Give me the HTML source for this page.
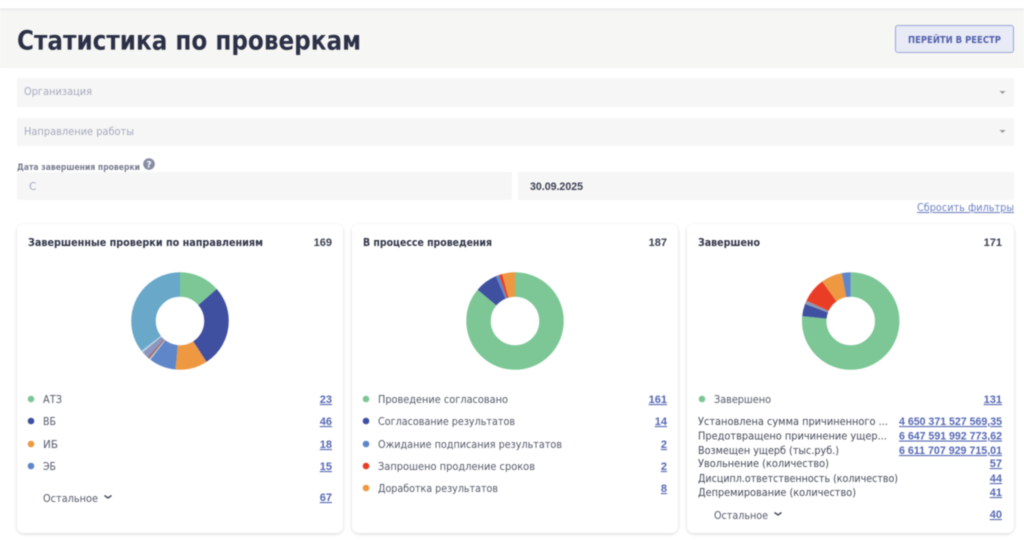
<!DOCTYPE html>
<html lang="ru"><head><meta charset="utf-8"><title>Статистика по проверкам</title>
<style>
html,body{margin:0;padding:0;width:1024px;height:540px;overflow:hidden;background:#fff}
svg{display:block;filter:blur(.5px)}
text{font-family:"DejaVu Sans","Liberation Sans",sans-serif}
.t{font-size:10.5px;fill:#555969}
.n{font-family:"Liberation Sans","DejaVu Sans",sans-serif;font-size:11px;font-weight:700;fill:#5568b4;text-decoration:underline}
.h{font-size:10.5px;font-weight:700;fill:#2f3447}
.v{font-family:"Liberation Sans","DejaVu Sans",sans-serif;font-size:11px;font-weight:700;fill:#3a3f50}
.p{font-size:10.5px;fill:#a3aabc}
circle.s{fill:none;stroke-width:24.5}
</style></head><body>
<svg width="1024" height="540" viewBox="0 0 1024 540" xmlns="http://www.w3.org/2000/svg">
<defs><filter id="sh" x="-5%" y="-5%" width="110%" height="110%"><feDropShadow dx="0" dy="1" stdDeviation="1.6" flood-color="#000" flood-opacity=".16"/></filter></defs>
<rect width="1024" height="540" fill="#fff"/>
<rect y="8" width="1024" height="3" fill="#efefef"/>
<rect y="11" width="1024" height="57" fill="#f6f6f4"/>
<text x="17" y="49.5" font-size="26.5" font-weight="700" fill="#2c3147" textLength="344" lengthAdjust="spacingAndGlyphs">Статистика по проверкам</text>
<rect x="895.5" y="25.5" width="118" height="27" rx="2.5" fill="#e8ebf6" stroke="#9aa6d6"/>
<text x="908" y="43" font-size="10" font-weight="700" fill="#5361ab" textLength="93" lengthAdjust="spacingAndGlyphs">ПЕРЕЙТИ В РЕЕСТР</text>

<rect x="17" y="78" width="997" height="29" rx="2" fill="#f6f6f6"/>
<text class="p" x="24" y="95" textLength="68" lengthAdjust="spacingAndGlyphs">Организация</text>
<path d="M999.5 91h6l-3 3z" fill="#9a9a9e"/>
<rect x="17" y="118" width="997" height="28" rx="2" fill="#f6f6f6"/>
<text class="p" x="24" y="135" textLength="110" lengthAdjust="spacingAndGlyphs">Направление работы</text>
<path d="M999.5 130h6l-3 3z" fill="#9a9a9e"/>

<text x="17" y="170" font-size="9" font-weight="700" fill="#787d90" textLength="123" lengthAdjust="spacingAndGlyphs">Дата завершения проверки</text>
<circle cx="149" cy="164" r="5.8" fill="#878da3"/>
<text x="149" y="167.5" font-size="9" font-weight="700" fill="#fff" text-anchor="middle">?</text>
<rect x="17" y="172" width="495" height="28" rx="2" fill="#f6f6f6"/>
<text class="p" x="29" y="190">С</text>
<rect x="518" y="172" width="496" height="28" rx="2" fill="#f6f6f6"/>
<text class="v" x="530" y="190" textLength="53" lengthAdjust="spacingAndGlyphs">30.09.2025</text>
<text x="917" y="211" font-size="10.5" fill="#6d80c2" text-decoration="underline" textLength="97" lengthAdjust="spacingAndGlyphs">Сбросить фильтры</text>

<!-- card 1 -->
<rect x="17" y="224" width="326" height="309" rx="7" fill="#fff" filter="url(#sh)"/>
<text class="h" x="28" y="246" textLength="235" lengthAdjust="spacingAndGlyphs">Завершенные проверки по направлениям</text>
<text class="v" x="332" y="246" text-anchor="end">169</text>
<g transform="rotate(-90 180 321)">
<circle class="s" cx="180" cy="321" r="36.5" pathLength="169" stroke="#7cc795" stroke-dasharray="23 146" stroke-dashoffset="0"/>
<circle class="s" cx="180" cy="321" r="36.5" pathLength="169" stroke="#3f50a0" stroke-dasharray="46 123" stroke-dashoffset="-23"/>
<circle class="s" cx="180" cy="321" r="36.5" pathLength="169" stroke="#ee9842" stroke-dasharray="18 151" stroke-dashoffset="-69"/>
<circle class="s" cx="180" cy="321" r="36.5" pathLength="169" stroke="#5f86c9" stroke-dasharray="15 154" stroke-dashoffset="-87"/>
<circle class="s" cx="180" cy="321" r="36.5" pathLength="169" stroke="#a8c8df" stroke-dasharray="1 168" stroke-dashoffset="-102"/>
<circle class="s" cx="180" cy="321" r="36.5" pathLength="169" stroke="#b0574f" stroke-dasharray="1 168" stroke-dashoffset="-103"/>
<circle class="s" cx="180" cy="321" r="36.5" pathLength="169" stroke="#8b97c0" stroke-dasharray="4 165" stroke-dashoffset="-104"/>
<circle class="s" cx="180" cy="321" r="36.5" pathLength="169" stroke="#b7d6e6" stroke-dasharray="1 168" stroke-dashoffset="-108"/>
<circle class="s" cx="180" cy="321" r="36.5" pathLength="169" stroke="#69a8c9" stroke-dasharray="60 109" stroke-dashoffset="-109"/>
</g>
<circle cx="31" cy="399" r="3.3" fill="#7cc795"/><text class="t" x="43" y="403" textLength="19" lengthAdjust="spacingAndGlyphs">АТЗ</text><text class="n" x="332" y="403" text-anchor="end">23</text>
<circle cx="31" cy="421" r="3.3" fill="#3f50a0"/><text class="t" x="43" y="425" textLength="13" lengthAdjust="spacingAndGlyphs">ВБ</text><text class="n" x="332" y="425" text-anchor="end">46</text>
<circle cx="31" cy="444" r="3.3" fill="#ee9842"/><text class="t" x="43" y="448" textLength="15" lengthAdjust="spacingAndGlyphs">ИБ</text><text class="n" x="332" y="448" text-anchor="end">18</text>
<circle cx="31" cy="466" r="3.3" fill="#5f86c9"/><text class="t" x="43" y="470" textLength="13" lengthAdjust="spacingAndGlyphs">ЭБ</text><text class="n" x="332" y="470" text-anchor="end">15</text>
<text class="t" x="43" y="502" textLength="55" lengthAdjust="spacingAndGlyphs">Остальное</text>
<path d="M104.5 495.5l3.5 2.5 3.5-2.5" fill="none" stroke="#454a5c" stroke-width="1.4"/>
<text class="n" x="332" y="501" text-anchor="end">67</text>

<!-- card 2 -->
<rect x="352" y="224" width="326" height="309" rx="7" fill="#fff" filter="url(#sh)"/>
<text class="h" x="363" y="246" textLength="129" lengthAdjust="spacingAndGlyphs">В процессе проведения</text>
<text class="v" x="667" y="246" text-anchor="end">187</text>
<g transform="rotate(-90 515 321)">
<circle class="s" cx="515" cy="321" r="36.5" pathLength="187" stroke="#7cc795" stroke-dasharray="161 26" stroke-dashoffset="0"/>
<circle class="s" cx="515" cy="321" r="36.5" pathLength="187" stroke="#3f50a0" stroke-dasharray="14 173" stroke-dashoffset="-161"/>
<circle class="s" cx="515" cy="321" r="36.5" pathLength="187" stroke="#5f86c9" stroke-dasharray="2 185" stroke-dashoffset="-175"/>
<circle class="s" cx="515" cy="321" r="36.5" pathLength="187" stroke="#ea3d26" stroke-dasharray="2 185" stroke-dashoffset="-177"/>
<circle class="s" cx="515" cy="321" r="36.5" pathLength="187" stroke="#ee9842" stroke-dasharray="8 179" stroke-dashoffset="-179"/>
</g>
<circle cx="366" cy="399" r="3.3" fill="#7cc795"/><text class="t" x="378" y="403" textLength="130" lengthAdjust="spacingAndGlyphs">Проведение согласовано</text><text class="n" x="667" y="403" text-anchor="end">161</text>
<circle cx="366" cy="421" r="3.3" fill="#3f50a0"/><text class="t" x="378" y="425" textLength="137" lengthAdjust="spacingAndGlyphs">Согласование результатов</text><text class="n" x="667" y="425" text-anchor="end">14</text>
<circle cx="366" cy="444" r="3.3" fill="#5f86c9"/><text class="t" x="378" y="448" textLength="184" lengthAdjust="spacingAndGlyphs">Ожидание подписания результатов</text><text class="n" x="667" y="448" text-anchor="end">2</text>
<circle cx="366" cy="466" r="3.3" fill="#ea3d26"/><text class="t" x="378" y="470" textLength="157" lengthAdjust="spacingAndGlyphs">Запрошено продление сроков</text><text class="n" x="667" y="470" text-anchor="end">2</text>
<circle cx="366" cy="488" r="3.3" fill="#ee9842"/><text class="t" x="378" y="492" textLength="120" lengthAdjust="spacingAndGlyphs">Доработка результатов</text><text class="n" x="667" y="492" text-anchor="end">8</text>

<!-- card 3 -->
<rect x="687" y="224" width="327" height="309" rx="7" fill="#fff" filter="url(#sh)"/>
<text class="h" x="698" y="246" textLength="62" lengthAdjust="spacingAndGlyphs">Завершено</text>
<text class="v" x="1002" y="246" text-anchor="end">171</text>
<g transform="rotate(-90 850.7 321)">
<circle class="s" cx="850.7" cy="321" r="36.5" pathLength="171" stroke="#7cc795" stroke-dasharray="131 40" stroke-dashoffset="0"/>
<circle class="s" cx="850.7" cy="321" r="36.5" pathLength="171" stroke="#3f50a0" stroke-dasharray="7 164" stroke-dashoffset="-131"/>
<circle class="s" cx="850.7" cy="321" r="36.5" pathLength="171" stroke="#8b97b0" stroke-dasharray="2 169" stroke-dashoffset="-138"/>
<circle class="s" cx="850.7" cy="321" r="36.5" pathLength="171" stroke="#ea3d26" stroke-dasharray="14 157" stroke-dashoffset="-140"/>
<circle class="s" cx="850.7" cy="321" r="36.5" pathLength="171" stroke="#ee9842" stroke-dasharray="12 159" stroke-dashoffset="-154"/>
<circle class="s" cx="850.7" cy="321" r="36.5" pathLength="171" stroke="#5f86c9" stroke-dasharray="5 166" stroke-dashoffset="-166"/>
</g>
<circle cx="702" cy="399" r="3.3" fill="#7cc795"/><text class="t" x="714" y="403" textLength="57" lengthAdjust="spacingAndGlyphs">Завершено</text><text class="n" x="1002" y="403" text-anchor="end">131</text>
<text class="t" x="698" y="425" textLength="190" lengthAdjust="spacingAndGlyphs" style="fill:#474b5b">Установлена сумма причиненного ...</text><text class="n" x="1002" y="425" text-anchor="end" textLength="103" lengthAdjust="spacingAndGlyphs">4 650 371 527 569,35</text>
<text class="t" x="698" y="439.5" textLength="189" lengthAdjust="spacingAndGlyphs" style="fill:#474b5b">Предотвращено причинение ущер...</text><text class="n" x="1002" y="439.5" text-anchor="end" textLength="103" lengthAdjust="spacingAndGlyphs">6 647 591 992 773,62</text>
<text class="t" x="698" y="454" textLength="141" lengthAdjust="spacingAndGlyphs" style="fill:#474b5b">Возмещен ущерб (тыс.руб.)</text><text class="n" x="1002" y="454" text-anchor="end" textLength="103" lengthAdjust="spacingAndGlyphs">6 611 707 929 715,01</text>
<text class="t" x="698" y="467" textLength="131" lengthAdjust="spacingAndGlyphs" style="fill:#474b5b">Увольнение (количество)</text><text class="n" x="1002" y="467" text-anchor="end">57</text>
<text class="t" x="698" y="482" textLength="200" lengthAdjust="spacingAndGlyphs" style="fill:#474b5b">Дисципл.ответственность (количество)</text><text class="n" x="1002" y="482" text-anchor="end">44</text>
<text class="t" x="698" y="496" textLength="158" lengthAdjust="spacingAndGlyphs" style="fill:#474b5b">Депремирование (количество)</text><text class="n" x="1002" y="496" text-anchor="end">41</text>
<text class="t" x="714" y="519" textLength="54" lengthAdjust="spacingAndGlyphs">Остальное</text>
<path d="M774.5 512.5l3.5 2.5 3.5-2.5" fill="none" stroke="#454a5c" stroke-width="1.4"/>
<text class="n" x="1002" y="518" text-anchor="end">40</text>
</svg>
</body></html>
